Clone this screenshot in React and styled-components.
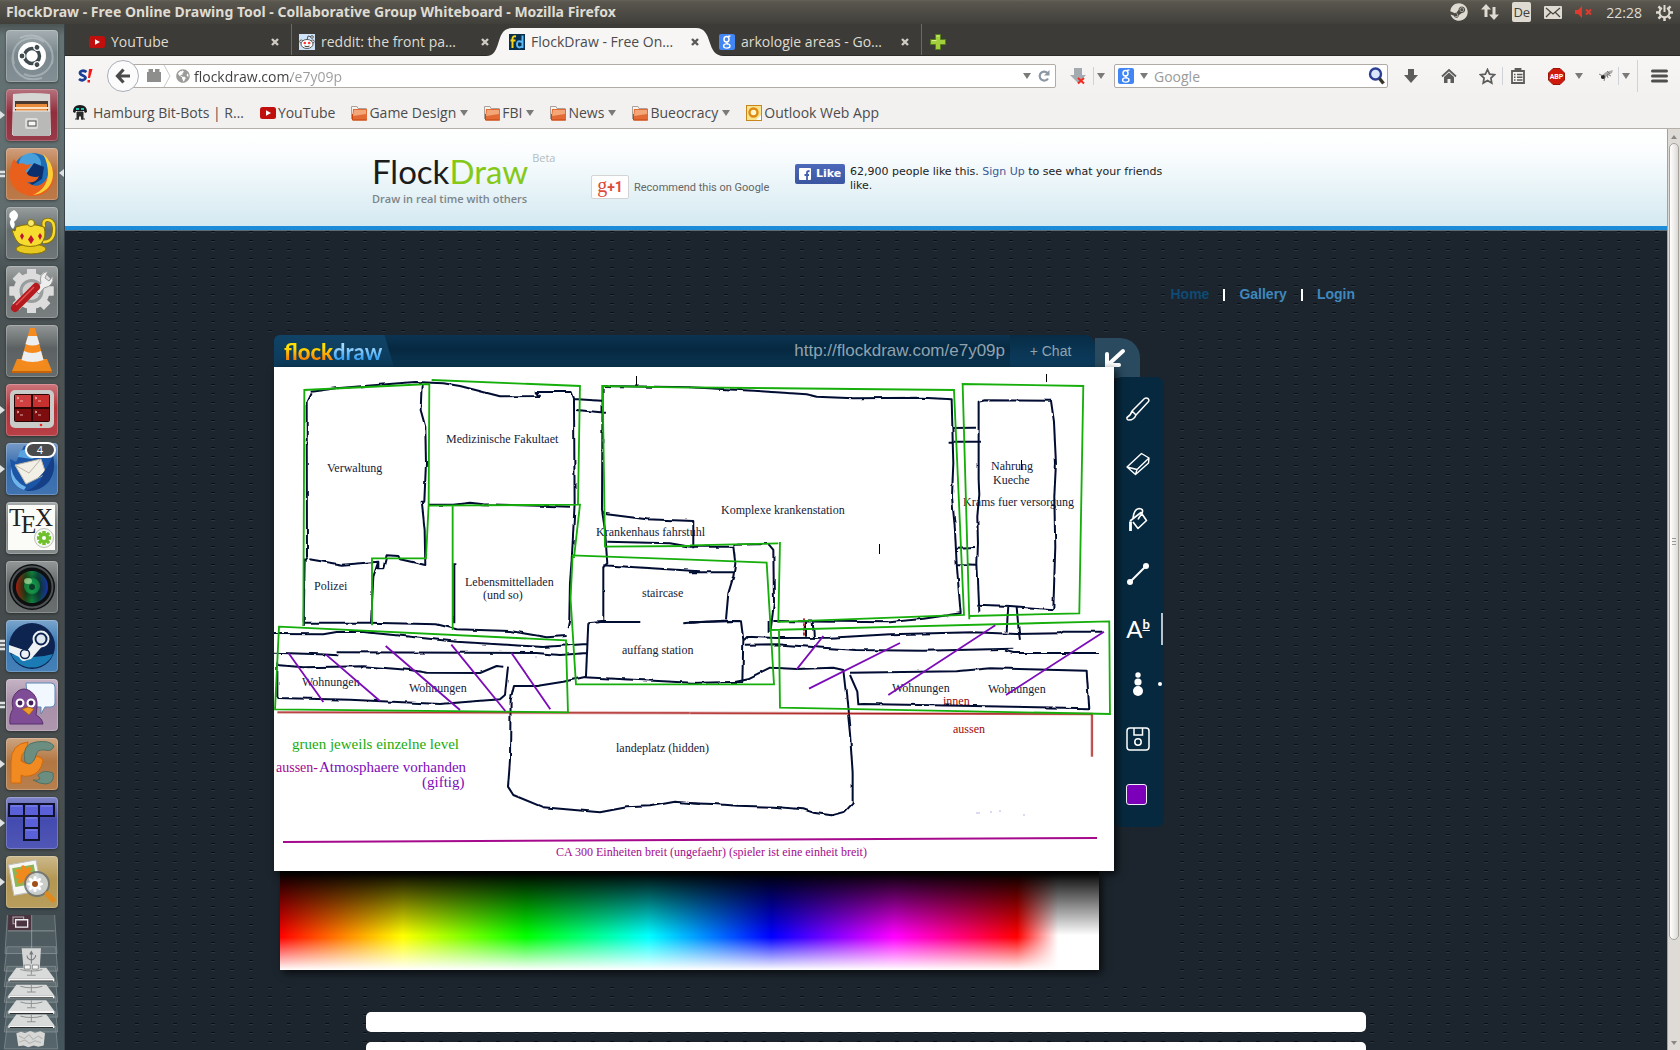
import React from "react";
import styled, { createGlobalStyle, css } from "styled-components";
import { FaSteam, FaGlobeAmericas } from "react-icons/fa";

const ui = '"Open Sans", "Noto Sans", sans-serif';
const arial = '"Liberation Sans", sans-serif';

const Global = createGlobalStyle`
  *, *::before, *::after { box-sizing: border-box; }
  body { margin: 0; font-family: ${ui}; overflow: hidden; }
  button, input { font: inherit; margin: 0; padding: 0; border: 0; background: none; color: inherit; }
  a { text-decoration: none; color: inherit; }
  svg { display: block; flex: none; }
  h1, p { margin: 0; }
`;

/* ---------- desktop ---------- */

const Desktop = styled.div`
  display: flex;
  flex-direction: column;
  height: 100vh;
  overflow: hidden;
`;

const MenuBar = styled.header`
  display: flex;
  align-items: center;
  justify-content: space-between;
  flex: none;
  height: 24px;
  padding: 0 7px 0 6px;
  background: linear-gradient(#66625a 0, #59564e 2px, #403f3a 100%);
  color: #dfdbd2;
`;

const WindowTitle = styled.h1`
  font-family: "Noto Sans", sans-serif;
  font-size: 14px;
  font-weight: 700;
  line-height: 22px;
  white-space: nowrap;
`;

const Tray = styled.div`
  display: flex;
  align-items: center;
  gap: 13px;
  font-size: 14px;
`;

const TrayButton = styled.button`
  display: flex;
  align-items: center;
  justify-content: center;
  min-width: 18px;
  height: 20px;
`;

const Layout = styled(TrayButton)`
  width: 19px;
  border-radius: 2px;
  background: #dfdbd2;
  color: #403f3a;
  font-size: 13px;
`;

const Workspace = styled.div`
  display: flex;
  flex: 1;
  min-height: 0;
`;

/* ---------- launcher ---------- */

const Launcher = styled.nav`
  display: flex;
  flex-direction: column;
  align-items: center;
  gap: 7px;
  flex: none;
  width: 65px;
  padding: 6px 1px 0 0;
  overflow: hidden;
  border-right: 1px solid #39444a;
  background: linear-gradient(#4b5353 0, #657273 12px, #606c6d 200px, #485153 250px, #4d5353 360px, #454b4c 560px, #4a5050 800px, #3d494e 900px, #46565d 100%);
`;

const LauncherItem = styled.div`
  position: relative;
  flex: none;
  width: 64px;
  height: 52px;
  padding-left: 6px;
`;

const Tile = styled.button`
  display: block;
  width: 52px;
  height: 52px;
  overflow: hidden;
  border-radius: 4px;
  background: linear-gradient(rgba(255, 255, 255, 0.36), rgba(255, 255, 255, 0.04) 45%, rgba(255, 255, 255, 0.1)), ${(p) => p.$tint};
  box-shadow: inset 0 0 0 1px rgba(255, 255, 255, 0.22), 0 1px 3px rgba(0, 0, 0, 0.4);
`;

const Pips = styled.svg`
  position: absolute;
  left: 0;
  top: 18px;
`;

const FocusPip = styled.svg`
  position: absolute;
  right: 0;
  top: 20px;
`;

const Badge = styled.span`
  position: absolute;
  left: 25px;
  top: -1px;
  width: 31px;
  height: 16px;
  border: 2px solid #fff;
  border-radius: 8px;
  background: #4b4b4b;
  color: #fff;
  font-size: 11px;
  line-height: 12px;
  text-align: center;
`;

/* ---------- browser ---------- */

const Browser = styled.section`
  display: flex;
  flex-direction: column;
  flex: 1;
  min-width: 0;
`;

const TabStrip = styled.div`
  display: flex;
  flex: none;
  height: 32px;
  padding-left: 17px;
  background: #3c3b37;
  border-bottom: 1px solid #2c2b28;
`;

const Tab = styled.div`
  position: relative;
  display: flex;
  align-items: center;
  gap: 6px;
  width: 210px;
  padding: 4px 9px 0 7px;
  color: ${(p) => (p.$active ? "#4c4c4c" : "#dfdbd2")};
  font-size: 14px;
  border-right: ${(p) => (p.$line ? "1px solid #6d6a62" : "1px solid transparent")};
`;

const TabShape = styled.svg`
  position: absolute;
  left: -16px;
  top: 4px;
`;

const TabLabel = styled.button`
  position: relative;
  flex: 1;
  text-align: left;
  white-space: nowrap;
`;

const TabIcon = styled.span`
  position: relative;
  display: flex;
`;

const CloseTab = styled.button`
  position: relative;
  display: flex;
  padding: 3px;
`;

const AddTab = styled.button`
  display: flex;
  align-items: center;
  padding: 4px 8px 0;
`;

const Toolbar = styled.div`
  display: flex;
  align-items: center;
  flex: none;
  height: 40px;
  padding: 0 0 0 12px;
  background: linear-gradient(#f7f6f5, #f2f1f0);
`;

const ToolButton = styled.button`
  display: flex;
  align-items: center;
  justify-content: center;
  width: ${(p) => p.$w || 30}px;
  height: 32px;
  margin-left: ${(p) => p.$ml || 0}px;
  flex: none;
`;

const BackButton = styled.button`
  position: relative;
  z-index: 1;
  display: flex;
  align-items: center;
  justify-content: center;
  flex: none;
  width: 32px;
  height: 32px;
  margin: 0 -10px 0 14px;
  border: 1px solid #a9afb8;
  border-radius: 50%;
  background: #fbfbfb;
`;

const Field = styled.div`
  display: flex;
  align-items: center;
  height: 24px;
  border: 1px solid #b0aba4;
  border-radius: 2px;
  background: #fff;
`;

const AddressField = styled(Field)`
  flex: 1;
  gap: 4px;
  padding: 0 2px 0 16px;
  margin-right: 7px;
`;

const SearchField = styled(Field)`
  width: 274px;
  gap: 6px;
  padding: 0 2px 0 3px;
  margin: 0 8px 0 6px;
`;

const AddressInput = styled.input`
  flex: 1;
  min-width: 0;
  font-size: 14px;
  outline: 0;
  background: linear-gradient(to right, #3c3c3c 97px, #9a9a9a 97px);
  -webkit-background-clip: text;
  background-clip: text;
  -webkit-text-fill-color: transparent;
`;

const SearchInput = styled.input`
  flex: 1;
  min-width: 0;
  font-size: 14px;
  color: #4c4c4c;
  outline: 0;
  &::placeholder { color: #9a9a9a; opacity: 1; }
`;

const Rule = styled.span`
  width: 1px;
  height: ${(p) => p.$h || 18}px;
  margin-left: ${(p) => p.$ml || 0}px;
  background: #cfd2d6;
`;

const Bookmarks = styled.nav`
  display: flex;
  align-items: center;
  flex: none;
  gap: 16px;
  height: 33px;
  padding: 1px 7px 0;
  background: #f2f1f0;
  border-bottom: 1px solid #b4afa9;
  color: #4c4c4c;
  font-size: 14px;
`;

const bookmark = css`
  display: flex;
  align-items: center;
  gap: ${(p) => p.$gap || 2}px;
  white-space: nowrap;
`;
const BookmarkLink = styled.a`${bookmark}`;
const BookmarkFolder = styled.button`
  ${bookmark}
  svg:last-child { margin-left: 2px; }
`;

const Viewport = styled.div`
  display: flex;
  flex: 1;
  min-height: 0;
`;

const Scrollbar = styled.div`
  display: flex;
  flex-direction: column;
  flex: none;
  width: 13px;
  padding: 1px;
  border-left: 1px solid #a5a19b;
  background: #dedbd7;
`;

const ScrollArrow = styled.button`
  display: flex;
  align-items: center;
  justify-content: center;
  height: 13px;
  flex: none;
`;

const Thumb = styled.div`
  flex: none;
  display: flex;
  align-items: center;
  justify-content: center;
  height: 797px;
  border: 1px solid #a5a19b;
  border-radius: 6px;
  background: linear-gradient(to right, #fff, #efedeb 50%, #dcd9d5);
`;

const ScrollTrack = styled.div`
  flex: 1;
`;

/* ---------- page ---------- */

const Page = styled.main`
  flex: 1;
  min-width: 0;
  overflow: hidden;
`;

const Texture = styled.div`
  min-height: 100%;
  background-color: #1c252e;
  background-image: url("data:image/svg+xml,%3Csvg xmlns='http://www.w3.org/2000/svg' width='19' height='9'%3E%3Crect x='13' y='3' width='4' height='1' fill='%230b0f14'/%3E%3Crect x='13' y='4' width='4' height='1' fill='%232b353d'/%3E%3C/svg%3E");
`;

const SiteHeader = styled.header`
  height: 102px;
  background: linear-gradient(#ffffff 0, #fafdfe 25%, #d2e8f0 100%);
  border-bottom: 1px solid #5d6a72;
  box-shadow: inset 0 -4px 0 #1c8bd8;
`;

const Center = styled.div`
  width: 1000px;
  margin: 0 auto;
`;

const HeaderRow = styled(Center)`
  display: flex;
  align-items: flex-start;
  padding-left: 6px;
`;

const Brand = styled.a`
  display: block;
  width: 219px;
  padding-top: 20px;
`;

const BrandName = styled.span`
  display: flex;
  align-items: flex-start;
  gap: 4px;
  height: 44px;
  font-family: Lato, sans-serif;
  font-size: 33px;
  line-height: 44px;
  color: #1c1c1c;
  b { font-weight: 400; color: #85c918; }
  small { font: 11px/18px "Open Sans", sans-serif; color: #b3bcc0; }
`;

const Tagline = styled.span`
  display: block;
  font-size: 11px;
  font-weight: 600;
  line-height: 12px;
  color: #7d8588;
`;

const PlusOne = styled.div`
  display: flex;
  align-items: center;
  gap: 5px;
  width: 204px;
  padding-top: 46px;
  font: 11px Roboto, sans-serif;
  color: #666;
`;

const PlusOneButton = styled.button`
  width: 38px;
  height: 24px;
  border: 1px solid #d4d4d4;
  border-radius: 2px;
  background: #fff;
  color: #dd4b39;
  font: 700 14px/20px Roboto, sans-serif;
  span { font: 20px/16px "Liberation Serif", serif; }
`;

const LikeBox = styled.div`
  display: flex;
  gap: 5px;
  padding-top: 35px;
  font: 11px/14px "DejaVu Sans", sans-serif;
  color: #222;
  p { width: 330px; padding-top: 1px; }
  a { color: #3b5998; }
`;

const LikeButton = styled.button`
  display: flex;
  align-items: center;
  gap: 5px;
  width: 50px;
  height: 20px;
  padding-left: 4px;
  border-radius: 2px;
  background: linear-gradient(#4c69ba, #3b55a0);
  color: #fff;
  font-weight: 700;
`;

const SiteNav = styled(Center)`
  display: flex;
  justify-content: flex-end;
  gap: 14px;
  padding: 55px 11px 0 0;
  height: 104px;
  font: 700 14px/16px ${arial};
  color: #fff;
`;

const NavLink = styled.a`
  color: ${(p) => (p.$current ? "#0e4a74" : "#3f88bd")};
`;

const NavRule = styled.span`
  width: 2px;
  height: 12px;
  margin-top: 3px;
  background: #fff;
`;

const Board = styled.div`
  width: 900px;
  height: 650px;
  margin-left: -100px;
  padding-left: 8px;
  background: #1c252e;
`;

const BoardTop = styled.div`
  display: flex;
  height: 32px;
`;

const BoardBar = styled.div`
  display: flex;
  width: 821px;
  overflow: hidden;
  border-radius: 6px 10px 0 0;
  background: linear-gradient(#0b3452, #062840 45%, #0b3653);
  color: #8fa3b0;
  font-family: ${arial};
`;

const BoardLogo = styled.div`
  width: 120px;
  padding-left: 10px;
  clip-path: polygon(0 0, 92% 0, 100% 100%, 0 100%);
  background: linear-gradient(#104366, #0c3a5a);
  font: 700 22px/34px Lato, sans-serif;
  b, span {
    -webkit-background-clip: text;
    background-clip: text;
    -webkit-text-fill-color: transparent;
  }
  b { background-image: linear-gradient(#ffe000 35%, #ff8a00 75%); }
  span { background-image: linear-gradient(#a8dcff 30%, #3aa5f5 75%); }
`;

const ShareUrl = styled.a`
  flex: 1;
  padding-right: 5px;
  text-align: right;
  font-size: 17px;
  line-height: 32px;
`;

const ChatButton = styled.button`
  width: 85px;
  padding-right: 4px;
  background: linear-gradient(#072c46, #0d3d5f);
  font-size: 14px;
  line-height: 30px;
`;

const FoldButton = styled.button`
  display: flex;
  justify-content: center;
  width: 45px;
  height: 40px;
  margin-top: 3px;
  padding: 10px 6px 0 0;
  border-radius: 0 20px 0 0;
  background: #294a5f;
`;

const BoardBody = styled.div`
  position: relative;
  display: flex;
  align-items: flex-start;
`;

const Sheet = styled.div`
  position: relative;
  z-index: 1;
  width: 840px;
  background: #fff;
  box-shadow: 3px 3px 8px rgba(0, 0, 0, 0.75);
`;

const Tools = styled.div`
  display: flex;
  flex-direction: column;
  align-items: center;
  gap: 19px;
  width: 50px;
  height: 450px;
  margin-top: 10px;
  padding: 14px 0 0 0;
  border-radius: 8px;
  background: #07293f;
`;

const Tool = styled.button`
  position: relative;
  display: flex;
  align-items: center;
  justify-content: center;
  width: 50px;
  height: 36px;
  padding-right: 2px;
  color: #fff;
`;

const ActiveMark = styled.span`
  position: absolute;
  right: 1px;
  top: 2px;
  width: 2px;
  height: 32px;
  background: #b9c3cc;
`;

const SizeMark = styled.span`
  position: absolute;
  right: 2px;
  top: 16px;
  width: 4px;
  height: 4px;
  border-radius: 2px;
  background: #fff;
`;

const Swatch = styled.span`
  width: 21px;
  height: 21px;
  margin-right: 3px;
  border: 1px solid #f2eef6;
  border-radius: 3px;
  background: #7c00ba;
`;

const LetterTool = styled.span`
  font: 24px/24px Lato, sans-serif;
  sup { font-size: 13px; font-weight: 700; line-height: 0; text-decoration: underline; }
`;

const Spectrum = styled.div`
  width: 819px;
  height: 99px;
  margin-left: 6px;
  background:
    linear-gradient(#000 0, transparent 65%, transparent 67%, #fff 100%),
    linear-gradient(to right, #f00 0, #ff0 15%, #0f0 30%, #0ff 45%, #00f 60%, #f0f 75%, #f00 90%, #fff 95%);
  box-shadow: 3px 3px 8px rgba(0, 0, 0, 0.7);
`;

const Panels = styled.div`
  display: grid;
  gap: 10px;
  padding-top: 27px;
`;

const Panel = styled.section`
  height: 20px;
  border-radius: 5px;
  background: #fff;
`;

/* ---------- small icons ---------- */

const Caret = ({ fill = "#7a7a78" }) => (
  <svg width="8" height="6" viewBox="0 0 8 6"><path d="M0 0h8L4 6z" fill={fill} /></svg>
);
const Cross = ({ c }) => (
  <svg width="8" height="8" viewBox="0 0 8 8"><path d="M1 1l6 6M7 1L1 7" stroke={c} strokeWidth="2.4" /></svg>
);
const YouTubeIcon = () => (
  <svg width="16" height="16" viewBox="0 0 16 16"><rect y="2" width="16" height="12" rx="2.5" fill="#c00f0c" /><path d="M6 5.2v5.6L11 8z" fill="#fff" /></svg>
);
const FolderIcon = () => (
  <svg width="16" height="16" viewBox="0 0 16 16">
    <path d="M.5 14V1.5h5.5l1 2h8.500" fill="#f6f4f1" stroke="#a9a29b" />
    <path d="M2 4h14v11.500H1z" fill="#e26a35" /><path d="M3 5h12v4L2 11z" fill="#f3a677" /><path d="M1.500 15V9M2 15h13.500" stroke="#c9450d" fill="none" />
  </svg>
);
const GoogleIcon = () => (
  <svg width="16" height="16" viewBox="0 0 16 16">
    <rect width="16" height="16" rx="2" fill="#4285f4" />
    <g fill="none" stroke="#fff"><ellipse cx="7.500" cy="5.200" rx="2.500" ry="2.800" strokeWidth="1.500" /><path d="M9 2.500l2.500-.7M7 8l2 2" strokeWidth="1.300" /><ellipse cx="7.800" cy="12" rx="3.200" ry="2.100" strokeWidth="1.400" /></g>
  </svg>
);
const FdIcon = () => (
  <svg width="16" height="16" viewBox="0 0 16 16">
    <rect width="16" height="16" fill="#08304c" />
    <path d="M7 2.500C4.500 2 3.500 3 3.500 5v9M1.500 6.500h5" stroke="#f7d417" strokeWidth="2" fill="none" />
    <path d="M13.500 1.500V14M13 8c-4-2-5 0-5 2.500s2 4 5 2" stroke="#59b8f5" strokeWidth="2" fill="none" />
  </svg>
);
const RedditIcon = () => (
  <svg width="16" height="16" viewBox="0 0 16 16">
    <rect width="16" height="16" fill="#cee3f8" />
    <g fill="#fff" stroke="#333" strokeWidth=".8"><path d="M8 6l1-4 4 1" fill="none" /><circle cx="13" cy="3" r="1.300" /><circle cx="2.300" cy="7.500" r="1.500" /><circle cx="13.700" cy="7.500" r="1.500" /><ellipse cx="8" cy="10" rx="6" ry="4.500" /></g>
    <circle cx="5.800" cy="9" r="1.300" fill="#f33" /><circle cx="10.200" cy="9" r="1.300" fill="#f33" /><path d="M5.500 12q2.500 1.500 5 0" stroke="#333" fill="none" />
  </svg>
);

/* ---------- launcher artwork ---------- */

const Art = ({ children }) => <svg width="52" height="52" viewBox="0 0 52 52">{children}</svg>;
const gear = Array.from({ length: 8 }, (_, i) => i * 45);

const DashArt = () => (
  <Art>
    <g fill="none" stroke="#c3cdd0" strokeWidth="2" opacity=".5"><path d="M8 34C2 12 24 2 38 12M44 16c10 20-10 36-26 28M14 8C30 0 50 12 46 34M36 48C14 54 2 36 8 20" /></g>
    <circle cx="26" cy="26" r="14" fill="#fff" />
    <circle cx="26" cy="26" r="7.500" fill="none" stroke="#3f4a4e" strokeWidth="3.500" />
    {[180, 60, -60].map((a) => <g key={a} transform={`rotate(${a} 26 26)`}><circle cx="36" cy="26" r="3" fill="#3f4a4e" stroke="#fff" strokeWidth="1.200" /></g>)}
  </Art>
);
const FilesArt = () => (
  <Art>
    <path d="M7 5q19-2 37 0l1 41H6z" fill="#d6d6d4" /><path d="M9 12h33v14H9z" fill="#4a3a30" />
    <path d="M10 15h31v8H10z" fill="#e88b3c" /><path d="M9 19h34" stroke="#fbe2c4" strokeWidth="2" />
    <path d="M7 22h37v25H7z" fill="#b9b9b7" /><path d="M7 22h37" stroke="#eee" />
    <rect x="19" y="29" width="13" height="11" rx="2" fill="#dcdcda" /><rect x="22" y="32" width="8" height="5" fill="#f6f6f6" stroke="#4a4a4a" />
  </Art>
);
const FirefoxArt = () => (
  <Art>
    <circle cx="27" cy="25" r="20" fill="#1d6cb5" /><circle cx="24" cy="16" r="11" fill="#5cb5e8" opacity=".7" /><path d="M28 15l10 4-2 12-10 6-8-8z" fill="#0b2f6c" />
    <path d="M8 11l4 5q5-2 8 1l5-1q-1 4-5 6 0 4 4 6 7 2 9 0-3 8-12 6 10 8 18-1 6-7 3-20 6 6 6 14c0 14-10 21-21 21S4 40 4 29c0-8 1-13 4-18z" fill="#e8601c" />
    <path d="M37 6q10 8 10 20c0 12-9 20-20 21q14-6 15-21 0-11-5-20z" fill="#fbcf3a" />
  </Art>
);
const TeapotArt = () => (
  <Art>
    <path d="M8 3q-8 4-3 9-3 5 2 10 3-4 1-7 8-7 0-12z" fill="#fff" />
    <ellipse cx="25" cy="42" rx="15" ry="5" fill="#e8c920" stroke="#8a7200" />
    <path d="M38 20q-2-8 5-7 6 1 5 12-1 10-11 10" fill="none" stroke="#8a7200" strokeWidth="4" /><path d="M38 20q-2-8 5-7 6 1 5 12-1 10-11 10" fill="none" stroke="#f7dc30" strokeWidth="2.400" />
    <path d="M10 20q14-5 28 0 3 10-3 17-11 5-21 0Q9 34 6 23l3 1z" fill="#f7dc30" stroke="#8a7200" />
    <circle cx="25" cy="16" r="3.500" fill="#f7e96b" stroke="#8a7200" />
    <path d="M25 28l3 4.500-3 4.500-3-4.500zM16 26l2 3-2 4-2-4zM34 26l2 3-2 4-2-4z" fill="#c3122f" />
  </Art>
);
const SettingsArt = () => (
  <Art>
    <g fill="#dcdcdc">{gear.map((a) => <rect key={a} x="21" y="3" width="9" height="44" transform={`rotate(${a} 25.500 25)`} />)}<circle cx="25.500" cy="25" r="18" /></g>
    <circle cx="25.500" cy="25" r="12" fill="#9a9d9d" /><circle cx="25.500" cy="25" r="9" fill="#d0d0d0" />
    <path d="M29 24l6-7q-3-9 7-12l-3 7 4 3 4-5q1 10-9 12l-5 6z" fill="#eee" stroke="#999" />
    <path d="M9 42L30 21" stroke="#b51a1e" strokeWidth="8" strokeLinecap="round" /><path d="M10 39L28 21" stroke="#e4585a" strokeWidth="1.500" />
  </Art>
);
const VlcArt = () => (
  <Art>
    <path d="M11 34h30l5 12H6z" fill="#f08a1c" /><path d="M6 46h40v2H6z" fill="#c7640a" />
    <path d="M24 3h5l10 37q-13 6-25 0z" fill="#f58a1f" /><path d="M22 11h9l2.500 8q-7 3-14 0zM18 26q8 4 17 0l2.500 9q-11 4-22 0z" fill="#eceef0" />
  </Art>
);
const TerminalArt = () => (
  <Art>
    <rect x="4" y="6" width="44" height="38" rx="5" fill="#c9cbc8" /><rect x="8" y="10" width="36" height="28" rx="2" fill="#2a0505" />
    {[[9, 11, "#d04040"], [27, 11, "#c83030"], [9, 25, "#7d0d0f"], [27, 25, "#7d0d0f"]].map(([x, y, c]) => (
      <g key={`${x}-${y}`}><rect x={x} y={y} width="16" height="12" fill={c} /><path d={`M${x + 2} ${y + 2}l2 1-2 1m3 2h3`} stroke="#f4d5d5" fill="none" strokeWidth=".8" /></g>
    ))}
    <circle cx="35" cy="41" r="1.300" fill="#e22" />
  </Art>
);
const ThunderbirdArt = () => (
  <Art>
    <path d="M18 3Q34 0 44 12q8 14-2 28-10 10-24 7Q2 42 5 24l-1-8 6 3z" fill="#1c55a5" /><path d="M14 8q14-6 22 4l-10 4-14-2z" fill="#57a3e0" />
    <path d="M9 22l26-6 5 15-20 10z" fill="#f2efe6" stroke="#bbb6a6" /><path d="M9 22l14 8 12-14" fill="none" stroke="#bbb6a6" />
    <path d="M47 12q4 18-6 28-9 9-22 8 14-4 18-16l-5 3q10-9 15-23z" fill="#153f86" />
    <path d="M5 24q2 14 15 20l-2 3Q3 42 5 24z" fill="#6fb4ea" />
  </Art>
);
const TexArt = () => (
  <Art>
    <rect x="2" y="3" width="47" height="45" fill="#fbfbf8" />
    <g fontFamily="Liberation Serif, serif" fill="#222"><text x="3" y="24" fontSize="25">T</text><text x="15" y="31" fontSize="25">E</text><text x="29" y="24" fontSize="25">X</text></g>
    <circle cx="38" cy="36" r="9.500" fill="#f4f6f2" stroke="#b9c2b2" />
    <g fill="#6fc02c">{gear.map((a) => <rect key={a} x="36.500" y="29" width="3" height="14" transform={`rotate(${a} 38 36)`} />)}<circle cx="38" cy="36" r="5" /></g><circle cx="38" cy="36" r="2" fill="#fff" />
  </Art>
);
const LensArt = () => (
  <Art>
    <defs>
      <linearGradient id="lensBands"><stop offset="0" stopColor="#c0230f" /><stop offset=".3" stopColor="#245a20" /><stop offset=".5" stopColor="#13a04e" /><stop offset=".7" stopColor="#12584a" /><stop offset="1" stopColor="#1c3bc4" /></linearGradient>
      <radialGradient id="lensDepth"><stop offset="0" stopColor="#052" stopOpacity=".1" /><stop offset=".5" stopColor="#000" stopOpacity=".4" /><stop offset="1" stopColor="#000" stopOpacity=".15" /></radialGradient>
    </defs>
    <circle cx="26" cy="26" r="23" fill="#0e0f10" /><circle cx="26" cy="26" r="20.500" fill="none" stroke="#4d5153" strokeWidth="2" />
    <circle cx="26" cy="26" r="16" fill="url(#lensBands)" /><circle cx="26" cy="26" r="16" fill="url(#lensDepth)" />
    <circle cx="26" cy="25" r="8" fill="#18a552" opacity=".6" /><circle cx="26" cy="26" r="3" fill="#0a3d26" /><ellipse cx="22" cy="20" rx="4" ry="3" fill="#c9f5b0" opacity=".6" />
  </Art>
);
const SteamArt = () => (
  <Art>
    <circle cx="26" cy="26" r="23" fill="#0d2350" /><path d="M5 34a23 23 0 0 0 42 0q-20 6-42 0z" fill="#1a7bb5" />
    <path d="M3 25l18 6 11-15 8 6-15 17-4 1q-5 3-8-3L3 32z" fill="#eef2f5" />
    <circle cx="35" cy="19" r="8.500" fill="#eef2f5" /><circle cx="35" cy="19" r="5.500" fill="#dfe7ee" stroke="#0d2350" strokeWidth="2" /><circle cx="19" cy="34" r="4.500" fill="none" stroke="#0d2350" strokeWidth="1.500" />
  </Art>
);
const PidginArt = () => (
  <Art>
    <path d="M20 4h25q4 0 4 4v16q0 4-4 4h-6l-4 7v-7H22z" fill="#f2f8ff" stroke="#5d86b5" />
    <path d="M12 12q6-4 12 0 8 5 7 16l-1 8q6 3 7 9H4q-1-9 3-15-3-12 5-18z" fill="#7f4d96" stroke="#59306c" />
    <circle cx="14" cy="24" r="4.500" fill="#fff" /><circle cx="25" cy="24" r="4.500" fill="#fff" /><circle cx="14" cy="24" r="2.400" fill="#43205c" /><circle cx="25" cy="24" r="2.400" fill="#43205c" />
    <path d="M16 30l6-2 6 2-5 6z" fill="#ee9a2a" stroke="#9e5a08" strokeWidth=".7" />
  </Art>
);
const PcArt = () => (
  <Art>
    <path d="M5 45V24Q5 6 22 4l-2 9q-5 2-5 10 8 5 12 0l3-5q5 1 7 4-2 14-14 16-5 1-8-1v8z" fill="#f28a22" stroke="#d06b0c" />
    <path d="M19 24Q15 6 30 4q14-2 18 4-2 6-9 4-8-1-9 5-2 8-7 9z" fill="#6b8e80" stroke="#4f7365" />
    <path d="M32 37q6-6 15-2 2 10-7 11-6 0-13-4 5 1 7-1z" fill="#6b8e80" stroke="#4f7365" />
  </Art>
);
const BlocksArt = () => (
  <Art>
    <g fill="#5a60d8" stroke="#10122a" strokeWidth="2"><rect x="3" y="7" width="15" height="12" /><rect x="18" y="7" width="15" height="12" /><rect x="33" y="7" width="15" height="12" /><rect x="18" y="19" width="15" height="12" /><rect x="18" y="31" width="15" height="12" /></g>
    <path d="M5 9h11M20 9h11M35 9h11M20 21h11M20 33h11" stroke="#868af0" />
  </Art>
);
const ViewerArt = () => (
  <Art>
    <g transform="rotate(-10 20 22)"><rect x="5" y="6" width="28" height="31" fill="#f6f6f3" stroke="#bbb" /><rect x="8" y="10" width="22" height="19" fill="#8cb556" />
      {gear.map((a) => <ellipse key={a} cx="19" cy="14" rx="2.500" ry="5" fill="#f08a1c" transform={`rotate(${a} 19 19)`} />)}</g>
    <circle cx="31" cy="28" r="12" fill="#cdd6dc" opacity=".85" stroke="#697176" strokeWidth="2" />
    {gear.map((a) => <ellipse key={a} cx="29" cy="24" rx="1.800" ry="4" fill="#fff" transform={`rotate(${a} 29 28)`} />)}<circle cx="29" cy="28" r="3" fill="#a05016" />
    <path d="M41 38l6 6" stroke="#e08a1e" strokeWidth="5" strokeLinecap="round" />
  </Art>
);

const apps = [
  { name: "Dash", tint: "#748288", art: DashArt },
  { name: "Files", tint: "#8c2535", art: FilesArt, run: 1 },
  { name: "Firefox", tint: "#b56b35", art: FirefoxArt, run: 2, focus: true },
  { name: "Teapot", tint: "#5f6768", art: TeapotArt },
  { name: "System Settings", tint: "#6a7071", art: SettingsArt },
  { name: "VLC", tint: "#555b5c", art: VlcArt },
  { name: "Terminator", tint: "#b02a32", art: TerminalArt, run: 1 },
  { name: "Thunderbird", tint: "#2c64a8", art: ThunderbirdArt, run: 1, badge: "4" },
  { name: "Texmaker", tint: "#777c7c", art: TexArt },
  { name: "Camera", tint: "#5a5f5f", art: LensArt },
  { name: "Steam", tint: "#3173b0", art: SteamArt, run: 3 },
  { name: "Pidgin", tint: "#a58ba5", art: PidginArt, run: 2 },
  { name: "PyCharm", tint: "#b0713a", art: PcArt, run: 1 },
  { name: "Blocks", tint: "#3c44ad", art: BlocksArt, run: 1 },
  { name: "Image Viewer", tint: "#b0924a", art: ViewerArt, run: 1 },
];

const FoldedStack = () => (
  <svg width="65" height="142" viewBox="0 1170 195 420" preserveAspectRatio="none">
    <g fill="rgba(200,210,212,.12)" stroke="#8c9699" strokeWidth="2">
      <path d="M26 1158h140l8 126H18z" /><path d="M24 1264h146l6 72H16z" /><path d="M24 1322h146l6 60H16z" /><path d="M24 1368h146l6 60H16z" /><path d="M24 1412h146l6 60H16z" /><path d="M24 1456h146l6 60H16z" /><path d="M24 1500h146l6 66H16z" />
    </g>
    <path d="M28 1160h70v56H27z" fill="#4a3440" /><path d="M98 1160v108M27 1217h140" stroke="#a9b1b3" strokeWidth="2" />
    <path d="M42 1176h32v20H42z" fill="none" stroke="#b8b0b4" strokeWidth="3" /><path d="M50 1184h36v22H50z" fill="#4a3440" stroke="#f2f2f2" strokeWidth="4" />
    {[1326, 1376, 1422, 1464].map((y) => (
      <g key={y}><path d={`M52 ${y}h90l24 32H28z`} fill="#d9dbdb" /><path d={`M28 ${y + 32}h138v8H28z`} fill="#f6f6f6" /><path d={`M32 ${y + 39}h130`} stroke="#2c2c2c" strokeWidth="3" /><path d={`M97 ${y}v20M64 ${y + 5}q34 9 66 0M84 ${y + 22}h26`} stroke="#8f9292" strokeWidth="3" fill="none" /></g>
    ))}
    <path d="M68 1268h58l-4 64H74z" fill="#d4d6d6" /><path d="M97 1282v32M84 1290q0 10 13 14 13-6 13-16M97 1278l-4 7h8z" stroke="#777" strokeWidth="3" fill="none" /><path d="M76 1318h18v12H76zM100 1318h18v12h-18z" fill="#f4f4f4" stroke="#666" strokeWidth="2" />
    <path d="M52 1520l14-5 12 4 16-6 14 5 16-4 14 6-4 36-16 4-14-4-16 5-14-5-16 2z" fill="#d7d8d6" /><path d="M60 1528l16 8 14-12 12 14 16-10 12 8M60 1546l18-6 14 10 16-8 18 6" stroke="#b3b5b2" strokeWidth="3" fill="none" />
  </svg>
);

/* ---------- whiteboard drawing ---------- */

const Label = ({ x, y, fill = "#161a38", size = 12, children }) => (
  <text x={x} y={y} fill={fill} fontSize={size} fontFamily="Liberation Serif, serif">{children}</text>
);

const NW = "translate(270 330) scale(.3333)";
const NE = "translate(690 330) scale(.3333)";
const SW = "translate(270 600) scale(.3333)";
const SE = "translate(690 600) scale(.3333)";

const Drawing = () => (
  <svg width="840" height="504" viewBox="274 367 840 504" role="img" aria-label="Arcology floor plan">
    <filter id="wobble" filterUnits="userSpaceOnUse" x="264" y="357" width="860" height="524">
      <feTurbulence type="fractalNoise" baseFrequency=".07" numOctaves="2" seed="4" />
      <feDisplacementMap in="SourceGraphic" scale="3" xChannelSelector="R" yChannelSelector="G" />
    </filter>
    <Label x="327" y="472">Verwaltung</Label>
    <Label x="446" y="443">Medizinische Fakultaet</Label>
    <Label x="314" y="590">Polizei</Label>
    <Label x="465" y="586">Lebensmittelladen</Label>
    <Label x="483" y="599">(und so)</Label>
    <Label x="596" y="536">Krankenhaus fahrstuhl</Label>
    <Label x="642" y="597">staircase</Label>
    <Label x="721" y="514">Komplexe krankenstation</Label>
    <Label x="991" y="470">Nahrung</Label>
    <Label x="993" y="484">Kueche</Label>
    <Label x="963" y="506">Krams fuer versorgung</Label>
    <Label x="622" y="654">auffang station</Label>
    <Label x="302" y="686">Wohnungen</Label>
    <Label x="409" y="692">Wohnungen</Label>
    <Label x="892" y="692">Wohnungen</Label>
    <Label x="988" y="693">Wohnungen</Label>
    <Label x="616" y="752">landeplatz (hidden)</Label>
    <Label x="943" y="705" fill="#a00808">innen</Label>
    <Label x="953" y="733" fill="#a00808">aussen</Label>
    <Label x="292" y="749" fill="#18ad0c" size={15}>gruen jeweils einzelne level</Label>
    <Label x="276" y="772" fill="#a5098c" size={14}>aussen-</Label>
    <Label x="319" y="772" fill="#7b0cb8" size={15}>Atmosphaere vorhanden</Label>
    <Label x="422" y="787" fill="#7b0cb8" size={15}>(giftig)</Label>
    <Label x="556" y="856" fill="#a5098c">CA 300 Einheiten breit (ungefaehr) (spieler ist eine einheit breit)</Label>

    <g fill="none" stroke="#050a30" strokeWidth="6" strokeLinejoin="round" filter="url(#wobble)">
      <path transform={NW} d="M122 185L200 175 320 165 435 156 520 160 570 168 640 186 690 199 810 198 800 186 905 186 912 205 914 520 908 640 905 690 900 760 898 870 893 895M122 190L110 215 111 680 104 690 101 888M455 165L452 240 466 290 468 400 463 515 455 515 460 560 464 600 466 705 390 688 385 678 350 676 340 715 325 715 325 695 310 740 303 880M118 688L215 704 325 695M475 524L550 524 600 518 640 523 900 530M553 700V880M912 207L995 212M920 240L1008 248M998 165L996 540 1005 600 1012 700 1000 712 1000 875 955 880M1005 552L1130 568 1270 573V655M1012 635L1200 640 1260 650M1000 706L1290 724M1000 875L1108 876M1240 880L1290 876" />
      <path transform={NE} d="M-262 168L0 172 190 182 350 193 380 200 490 205 700 203 785 208 790 400 786 500 795 600 800 700 812 850 700 866 600 877 250 873M785 294L858 293M776 335H873M800 656L855 654M800 702L860 704M868 845L862 700 864 640 862 560 868 490 866 450V215L885 211 1083 212 1092 275 1098 400 1093 500 1096 650 1090 838 960 828 862 824M955 828L950 905M980 830L986 900 990 930M0 650H130L136 700 130 740 115 790 108 868M0 727H130M130 644L235 642 250 660 252 820 242 900M0 877L150 873" />
      <path transform={SW} d="M100 68H300L500 73 560 88 720 93 830 112 890 108M12 102L160 103 200 96 280 96 400 108 560 125 820 141 950 132M12 158L150 163 205 166M200 157L800 159 870 165 950 159M22 190V294L240 299 510 312 690 298 705 285 714 200M22 195L100 202 280 199 420 210 470 218 630 219 680 198 700 200M955 70L948 230 880 245 800 258 732 258 722 300 720 480 714 560 730 585 820 622 990 637 1070 622 1140 619 1215 605 1290 612M945 232L1180 244 1280 249" />
      <path transform={SE} d="M0 68L100 62 153 64 160 120 157 245 0 249M135 243L175 235 240 203 320 207 430 203 460 210 470 300 480 400 488 520V610L465 635 425 646 370 638 340 628 250 620 140 617 70 612 0 610M162 120L172 110 260 114 420 113 600 103 850 97 980 102 1110 100 1120 95H1240M165 134L260 133 400 143 500 150 700 152 970 146M945 152L970 159H1228M480 218L800 214 900 205 1190 212 1198 325 850 318 525 312 505 313 502 275 480 225M368 65L372 112M236 60V98M348 60V110" />
    </g>
    <g fill="none" stroke="#a50c0c" strokeWidth="5">
      <path transform={SW} d="M22 337L1260 339" /><path transform={SE} d="M0 339L1206 342V470" /><path transform={SE} d="M342 55V108" strokeDasharray="10 4" />
    </g>
    <g fill="none" stroke="#16ae0b" strokeWidth="5.500">
      <path transform={NW} d="M100 888L103 180 478 162 476 524 468 685H306V886M485 150L930 168 924 524 475 527M548 524V900M924 524H930L912 684M905 676L1260 689M908 676L902 800 902 810 918 1063H1260M1260 173L998 168 1005 650 1260 648" />
      <path transform={NE} d="M0 172L792 180 822 855 265 876 270 636M0 646L265 640M0 689L230 698 252 1063H0M838 868L818 162 1180 168 1168 850 838 858" />
      <path transform={SW} d="M27 80L888 121 894 337 15 328Z" />
      <path transform={SE} d="M242 90L1258 64 1260 342 270 323 267 90" />
    </g>
    <g fill="none" stroke="#7b0cb8" strokeWidth="5.500">
      <path transform={SW} d="M56 160L160 306M168 164L330 303M347 138L570 330M544 134L706 333M724 158L841 328" />
      <path transform={SE} d="M320 208L400 108M357 266L630 129M595 285L916 76M948 285L1242 95" />
    </g>
    <path d="M283 842L1097 838" stroke="#a5098c" strokeWidth="2" />
    <path d="M636.500 376v9M1046.500 374v8M1021.500 460v10M879.500 544v10" stroke="#000" />
    <path d="M976 813h4M990 812h2M999 811h2M1023 815h2M535 657h2" stroke="#b9b5e6" />
  </svg>
);

const folders = ["Game Design", "FBI", "News", "Bueocracy"];

export default function App() {
  return (
    <Desktop>
      <Global />
      <MenuBar>
        <WindowTitle>FlockDraw - Free Online Drawing Tool - Collaborative Group Whiteboard - Mozilla Firefox</WindowTitle>
        <Tray>
          <TrayButton aria-label="Steam"><FaSteam size={18} /></TrayButton>
          <TrayButton aria-label="Network"><svg width="18" height="18" viewBox="0 0 18 18"><path d="M5 1L0 6.500h3.500V14h3V6.500H10zM13 17l5-5.500h-3.500V4h-3v7.500H8z" fill="#dfdbd2" /></svg></TrayButton>
          <Layout>De</Layout>
          <TrayButton aria-label="Mail"><svg width="18" height="13" viewBox="0 0 18 13"><rect width="18" height="13" rx="1" fill="#dfdbd2" /><path d="M2 2l7 6 7-6M2 11l4.500-4.500M16 11l-4.500-4.500" stroke="#45433e" strokeWidth="1.200" fill="none" /></svg></TrayButton>
          <TrayButton aria-label="Muted"><svg width="18" height="12" viewBox="0 0 18 12"><path d="M0 4h3l4-4v12L3 8H0z" fill="#e03a2c" /><path d="M11 3.500l5 5M16 3.500l-5 5" stroke="#e03a2c" strokeWidth="2" /></svg></TrayButton>
          <TrayButton>22:28</TrayButton>
          <TrayButton aria-label="Session"><svg width="17" height="17" viewBox="0 0 17 17"><g stroke="#dfdbd2" fill="none"><path d="M6 4a5 5 0 1 0 5 0" strokeWidth="2" /><path d="M8.500 1v7" strokeWidth="2" />{[45, 90, 135, 180, 225, 270, 315].map((a) => <path key={a} d="M8.500 0v3" strokeWidth="2.500" transform={`rotate(${a} 8.500 8.500)`} />)}</g></svg></TrayButton>
        </Tray>
      </MenuBar>
      <Workspace>
        <Launcher aria-label="Launcher">
          {apps.map(({ name, tint, art: Icon, run, focus, badge }) => (
            <LauncherItem key={name}>
              <Tile $tint={tint} aria-label={name}><Icon /></Tile>
              {run === 1 && <Pips width="5" height="16" viewBox="0 0 5 16"><path d="M0 4l5 4-5 4z" fill="#dfe2e2" /></Pips>}
              {run > 1 && <Pips width="5" height="16" viewBox="0 0 5 16"><path d={run === 2 ? "M0 6h5M0 10h5" : "M0 3h5M0 7h5M0 11h5"} stroke="#dfe2e2" strokeWidth="2.500" /></Pips>}
              {focus && <FocusPip width="5" height="10" viewBox="0 0 5 10"><path d="M5 1v8L0 5z" fill="#dfe2e2" /></FocusPip>}
              {badge && <Badge>{badge}</Badge>}
            </LauncherItem>
          ))}
          <FoldedStack />
        </Launcher>
        <Browser>
          <TabStrip>
            <Tab $line><TabIcon><YouTubeIcon /></TabIcon><TabLabel>YouTube</TabLabel><CloseTab aria-label="Close tab"><Cross c="#cfcbc3" /></CloseTab></Tab>
            <Tab><TabIcon><RedditIcon /></TabIcon><TabLabel>reddit: the front pa…</TabLabel><CloseTab aria-label="Close tab"><Cross c="#cfcbc3" /></CloseTab></Tab>
            <Tab $active>
              <TabShape width="238" height="28" viewBox="0 0 238 28"><path d="M0 28C17 28 8 0 26 0H210C228 0 219 28 238 28z" fill="#f7f6f5" /></TabShape>
              <TabIcon><FdIcon /></TabIcon><TabLabel>FlockDraw - Free On…</TabLabel><CloseTab aria-label="Close tab"><Cross c="#5a5955" /></CloseTab>
            </Tab>
            <Tab $line><TabIcon><GoogleIcon /></TabIcon><TabLabel>arkologie areas - Go…</TabLabel><CloseTab aria-label="Close tab"><Cross c="#cfcbc3" /></CloseTab></Tab>
            <AddTab aria-label="New tab"><svg width="16" height="16" viewBox="0 0 16 16"><path d="M5.500.500h5v5h5v5h-5v5h-5v-5h-5v-5h5z" fill="#a4cf3c" stroke="#55801a" /><path d="M6.500 2h3M2 6.500h4.500" stroke="#dcf08e" /></svg></AddTab>
          </TabStrip>
          <Toolbar>
            <ToolButton $w={16} aria-label="Stumble"><svg width="16" height="16" viewBox="0 0 16 16"><path d="M9.500 4C7 2 3 2.500 3 5s6 2.500 5.500 5-4 3-6.500 1" stroke="#1a3e95" strokeWidth="2.800" fill="none" /><path d="M12 1h3.500L13 10h-2zM10.500 12h2.500v2.500h-2.500z" fill="#f01818" /></svg></ToolButton>
            <BackButton aria-label="Back"><svg width="16" height="16" viewBox="0 0 16 16"><path d="M8.500 1.500L2.500 8l6 6.500M3 8h12" fill="none" stroke="#4a4a48" strokeWidth="3.200" /></svg></BackButton>
            <AddressField>
              <svg width="26" height="22" viewBox="0 0 26 22"><path d="M1 7h14v10H1zM2.500 4h4.500v3H2.500zM9 4h4.500v3H9z" fill="#8e8e8c" /><path d="M18 0l6 11-6 11" fill="none" stroke="#c9c9c7" /></svg>
              <FaGlobeAmericas size={14} color="#9b9b99" />
              <AddressInput aria-label="Address" defaultValue="flockdraw.com/e7y09p" />
              <Caret />
              <ToolButton $w={18} aria-label="Reload"><svg width="12" height="12" viewBox="0 0 12 12"><path d="M9.500 3A4.500 4.500 0 1 0 10 8.500" fill="none" stroke="#8b97a3" strokeWidth="2.200" /><path d="M11.500 0v5.500H6z" fill="#8b97a3" /></svg></ToolButton>
            </AddressField>
            <ToolButton aria-label="Download helper"><svg width="18" height="18" viewBox="0 0 18 18"><path d="M5 1h8v7h4l-8 8-8-8h4z" fill="#a4abb0" /><path d="M9 11l6 5.500M15 11l-6 5.500" stroke="#f22a20" strokeWidth="2" /></svg></ToolButton>
            <Rule />
            <ToolButton $w={14} aria-label="More"><Caret /></ToolButton>
            <SearchField>
              <GoogleIcon /><Caret />
              <SearchInput aria-label="Search" placeholder="Google" />
              <svg width="17" height="18" viewBox="0 0 17 18"><circle cx="7.500" cy="7" r="5.500" fill="#d9e6fb" stroke="#2c3e95" strokeWidth="2.400" /><path d="M11.500 11.500l4 5" stroke="#39342a" strokeWidth="3.400" /></svg>
            </SearchField>
            <ToolButton aria-label="Downloads"><svg width="14" height="16" viewBox="0 0 14 16"><path d="M4 1h6v6h4l-7 8-7-8h4z" fill="#5c5c5a" /></svg></ToolButton>
            <ToolButton $w={46} aria-label="Home"><svg width="16" height="16" viewBox="0 0 16 16"><path d="M1 8.500L8 2l7 6.500" fill="none" stroke="#5c5c5a" strokeWidth="1.800" /><path d="M3 9l5-4.500L13 9v6H9.500v-4h-3v4H3z" fill="#5c5c5a" /></svg></ToolButton>
            <ToolButton aria-label="Bookmark this page"><svg width="17" height="17" viewBox="0 0 17 17"><path d="M8.500 1.500l2.100 4.600 4.900.6-3.600 3.400.9 5-4.300-2.500-4.300 2.500.9-5L1.500 6.700l4.900-.6z" fill="none" stroke="#5c5c5a" strokeWidth="1.700" /></svg></ToolButton>
            <Rule />
            <ToolButton aria-label="Bookmarks"><svg width="14" height="16" viewBox="0 0 14 16"><path d="M1 3h12v12H1zM4.500 3V1h5v2" fill="none" stroke="#5c5c5a" strokeWidth="1.800" /><path d="M3 6.500h1.500M6 6.500h5.500M3 9.200h1.500M6 9.200h5.500M3 12h1.500M6 12h5.500" stroke="#5c5c5a" strokeWidth="1.400" /></svg></ToolButton>
            <ToolButton $w={16} $ml={15} aria-label="Adblock Plus"><svg width="17" height="17" viewBox="0 0 17 17"><path d="M5 .500h7L16.500 5v7L12 16.500H5L.500 12V5z" fill="#d0190d" stroke="#9b1409" /><text x="8.500" y="11" fontSize="7" fontWeight="700" fill="#fff" textAnchor="middle" fontFamily="Roboto, sans-serif">ABP</text></svg></ToolButton>
            <ToolButton aria-label="Adblock options"><Caret /></ToolButton>
            <ToolButton $w={24} aria-label="Firebug"><svg width="16" height="14" viewBox="0 0 16 14"><path d="M3 7l5-4 7-2-1 3-5 3-3 3-3-1z" fill="#a9a9a7" /><circle cx="5" cy="8" r="2" fill="#222" /><path d="M1 5l4 2M6 12l1-4M10 9L9 6M13 7L9 5M9 2l3 3" stroke="#666" strokeWidth=".8" /></svg></ToolButton>
            <Rule />
            <ToolButton $w={14} aria-label="Firebug options"><Caret /></ToolButton>
            <Rule $h={32} $ml={4} />
            <ToolButton $w={42} aria-label="Menu"><svg width="17" height="14" viewBox="0 0 17 14"><path d="M1.500 2h14M1.500 7h14M1.500 12h14" stroke="#4f4f4d" strokeWidth="3" strokeLinecap="round" /></svg></ToolButton>
          </Toolbar>
          <Bookmarks aria-label="Bookmarks">
            <BookmarkLink href="#bots" $gap={5}><svg width="16" height="17" viewBox="0 0 16 17"><path d="M1 8q0-7 7-7t7 7l-2 1-1-2H4L3 9z" fill="#1b1b1b" /><path d="M5 8h6v7H9.500v-3h-3v3H5zM3 15h4M9 15h4" fill="#2b2b2b" stroke="#2b2b2b" /><path d="M4 4h3v2H4zM9 4h3v2H9z" fill="#18c4b4" /></svg>Hamburg Bit-Bots | R…</BookmarkLink>
            <BookmarkLink href="#youtube"><YouTubeIcon />YouTube</BookmarkLink>
            {folders.map((f) => <BookmarkFolder key={f}><FolderIcon />{f}<Caret /></BookmarkFolder>)}
            <BookmarkLink href="#outlook"><svg width="16" height="16" viewBox="0 0 16 16"><rect x=".500" y=".500" width="15" height="15" fill="#f9e38c" stroke="#c8871a" /><circle cx="7.500" cy="7.500" r="4" fill="#fff6d0" stroke="#dd8a14" strokeWidth="2.400" /><path d="M10 15h5v-5z" fill="#fff" /></svg>Outlook Web App</BookmarkLink>
          </Bookmarks>
          <Viewport>
            <Page>
              <Texture>
                <SiteHeader>
                  <HeaderRow>
                    <Brand href="#home"><BrandName><span>Flock<b>Draw</b></span><small>Beta</small></BrandName><Tagline>Draw in real time with others</Tagline></Brand>
                    <PlusOne><PlusOneButton><span>g</span>+1</PlusOneButton>Recommend this on Google</PlusOne>
                    <LikeBox>
                      <LikeButton><svg width="12" height="12" viewBox="0 0 12 12"><rect width="12" height="12" rx="1" fill="#fff" /><path d="M8 12V4.500Q8 3 10.500 3M5.500 7h4.500" stroke="#4560ad" strokeWidth="1.800" fill="none" /></svg>Like</LikeButton>
                      <p>62,900 people like this. <a href="#signup">Sign Up</a> to see what your friends like.</p>
                    </LikeBox>
                  </HeaderRow>
                </SiteHeader>
                <SiteNav as="nav">
                  <NavLink href="#home" $current>Home</NavLink><NavRule /><NavLink href="#gallery">Gallery</NavLink><NavRule /><NavLink href="#login">Login</NavLink>
                </SiteNav>
                <Center>
                  <Board>
                    <BoardTop>
                      <BoardBar>
                        <BoardLogo><b>flock</b><span>draw</span></BoardLogo>
                        <ShareUrl href="#e7y09p">http://flockdraw.com/e7y09p</ShareUrl>
                        <ChatButton>+ Chat</ChatButton>
                      </BoardBar>
                      <FoldButton aria-label="Collapse"><svg width="22" height="22" viewBox="0 0 22 22"><path d="M19 3L6 15M3 6v11h12" fill="none" stroke="#fff" strokeWidth="4" strokeLinecap="round" /></svg></FoldButton>
                    </BoardTop>
                    <BoardBody>
                      <Sheet><Drawing /></Sheet>
                      <Tools>
                        <Tool aria-label="Brush"><svg width="24" height="24" viewBox="0 0 24 24" fill="none" stroke="#fff" strokeWidth="1.500" strokeLinejoin="round"><path d="M6 14L18.500 1.500Q20 .500 22 1.500 23.500 3 22.500 4.500L10 18zM6 14Q5 18 1 20.500 .500 23 3 23q5 0 7-5z" /></svg></Tool>
                        <Tool aria-label="Eraser"><svg width="24" height="24" viewBox="0 0 24 24" fill="none" stroke="#fff" strokeWidth="1.400" strokeLinejoin="round"><path d="M1 15L15.500 1.500 23 6l-.500 5L9.500 22.500zM1 15l10 2.500L23 6M11 17.500l-1.500 5" /></svg></Tool>
                        <Tool aria-label="Fill"><svg width="20" height="25" viewBox="0 0 20 25" fill="none" stroke="#fff" strokeWidth="1.600" strokeLinejoin="round"><path d="M2 14L13 5.500l5.500 8L10 21.500 5 15M5 11Q6 2 11 1.500q5 0 3 5-3 4-4 6" /><path d="M2.500 24v-9.500" strokeWidth="2.800" /></svg></Tool>
                        <Tool aria-label="Line"><svg width="24" height="24" viewBox="0 0 24 24"><path d="M4 20L20 4" stroke="#fff" strokeWidth="2" /><circle cx="4" cy="20" r="3" fill="#fff" /><circle cx="20" cy="4" r="3" fill="#fff" /></svg></Tool>
                        <Tool aria-label="Text"><LetterTool>A<sup>b</sup></LetterTool><ActiveMark /></Tool>
                        <Tool aria-label="Size"><svg width="12" height="26" viewBox="0 0 12 26" fill="#fff"><circle cx="6" cy="4" r="2.700" /><circle cx="6" cy="11" r="3.600" /><circle cx="6" cy="20" r="5" /></svg><SizeMark /></Tool>
                        <Tool aria-label="Save"><svg width="24" height="24" viewBox="0 0 24 24" fill="none" stroke="#fff" strokeWidth="1.500"><rect x="1" y="1" width="22" height="22" rx="3" /><path d="M8 1v7h8.500V1" /><circle cx="12" cy="15" r="3.200" /></svg></Tool>
                        <Tool aria-label="Colour"><Swatch /></Tool>
                      </Tools>
                    </BoardBody>
                    <Spectrum role="img" aria-label="Colour spectrum" />
                  </Board>
                  <Panels><Panel /><Panel /></Panels>
                </Center>
              </Texture>
            </Page>
            <Scrollbar>
              <ScrollArrow aria-label="Scroll up"><svg width="6" height="4" viewBox="0 0 6 4"><path d="M3 0l3 4H0z" fill="#8b8883" /></svg></ScrollArrow>
              <Thumb><svg width="4" height="7" viewBox="0 0 4 7"><path d="M0 .500h4M0 3.500h4M0 6.500h4" stroke="#9b9791" /></svg></Thumb>
              <ScrollTrack />
              <ScrollArrow aria-label="Scroll down"><svg width="6" height="4" viewBox="0 0 6 4"><path d="M3 4L0 0h6z" fill="#8b8883" /></svg></ScrollArrow>
            </Scrollbar>
          </Viewport>
        </Browser>
      </Workspace>
    </Desktop>
  );
}
